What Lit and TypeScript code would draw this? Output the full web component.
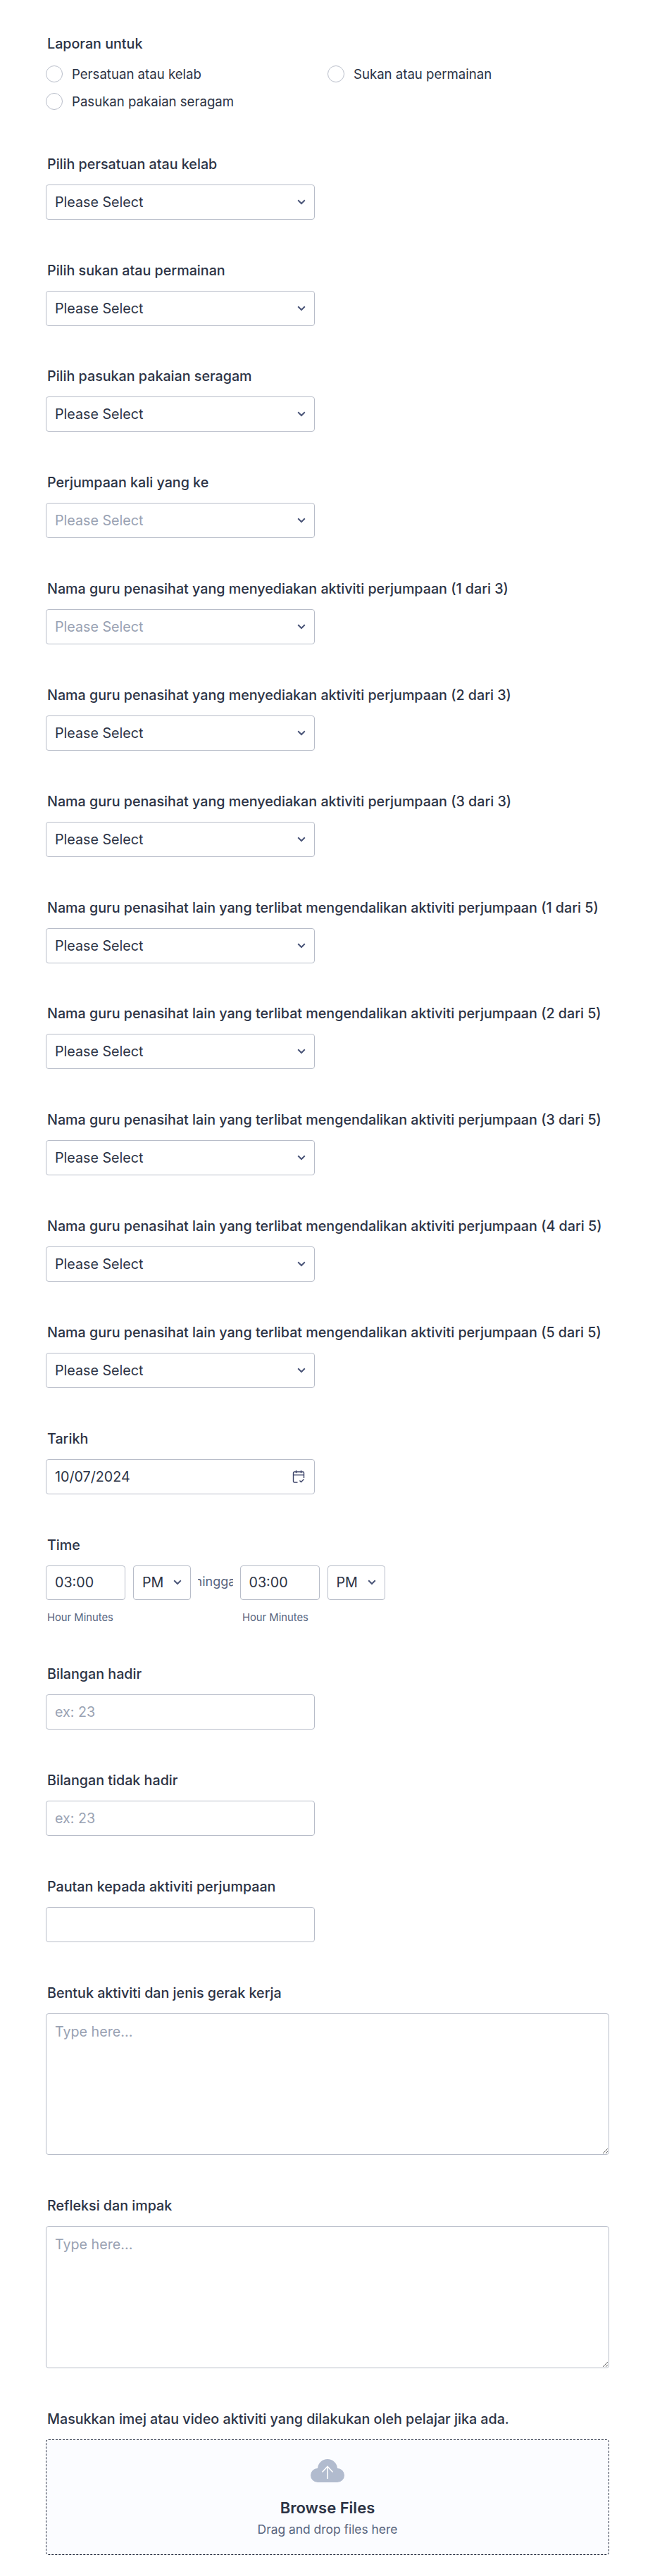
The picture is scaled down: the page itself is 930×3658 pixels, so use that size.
import { LitElement, html, css } from 'lit'
import { customElement } from 'lit/decorators.js'

const chevron = html`<svg class="chev" width="12" height="8" viewBox="0 0 12 8" fill="none"><path d="M1.2 1.300 6 6l4.800-4.700" stroke="#4a5578" stroke-width="2"/></svg>`

const selectFields: { label: string; muted?: boolean }[] = [
  { label: 'Pilih persatuan atau kelab' },
  { label: 'Pilih sukan atau permainan' },
  { label: 'Pilih pasukan pakaian seragam' },
  { label: 'Perjumpaan kali yang ke', muted: true },
  { label: 'Nama guru penasihat yang menyediakan aktiviti perjumpaan (1 dari 3)', muted: true },
  { label: 'Nama guru penasihat yang menyediakan aktiviti perjumpaan (2 dari 3)' },
  { label: 'Nama guru penasihat yang menyediakan aktiviti perjumpaan (3 dari 3)' },
  { label: 'Nama guru penasihat lain yang terlibat mengendalikan aktiviti perjumpaan (1 dari 5)' },
  { label: 'Nama guru penasihat lain yang terlibat mengendalikan aktiviti perjumpaan (2 dari 5)' },
  { label: 'Nama guru penasihat lain yang terlibat mengendalikan aktiviti perjumpaan (3 dari 5)' },
  { label: 'Nama guru penasihat lain yang terlibat mengendalikan aktiviti perjumpaan (4 dari 5)' },
  { label: 'Nama guru penasihat lain yang terlibat mengendalikan aktiviti perjumpaan (5 dari 5)' },
]

@customElement('app-root')
export class AppRoot extends LitElement {
  static styles = css`
    :host {
      display: block;
      background: #fff;
      color: #2c3345;
      font-family: Inter, sans-serif;
    }

    .form {
      display: flex;
      flex-direction: column;
      gap: 61.83px;
      padding: 52px 65px 30px;
    }

    .field {
      display: flex;
      flex-direction: column;
      gap: 19px;
    }

    .label {
      padding-left: 2px;
      font-size: 19.7px;
      line-height: 20px;
      font-weight: 500;
      white-space: nowrap;
    }

    .radios {
      display: grid;
      grid-template-columns: 400px 400px;
      gap: 15px 0;
      margin: 2px 0 5px;
    }

    .radio {
      display: flex;
      align-items: center;
      gap: 13px;
      font-size: 18.6px;
      height: 24px;
    }

    .radio i {
      width: 24px;
      height: 24px;
      box-sizing: border-box;
      border: 1px solid #b8bdc9;
      border-radius: 50%;
    }

    .box {
      position: relative;
      width: 382px;
      height: 50px;
    }

    select,
    input,
    textarea {
      display: block;
      width: 100%;
      height: 100%;
      box-sizing: border-box;
      margin: 0;
      border: 1px solid #b8bdc9;
      border-radius: 4px;
      background: #fff;
      color: #2c3345;
      font-family: inherit;
      font-size: 19.7px;
      outline: none;
    }

    select {
      appearance: none;
      padding: 0 30px 0 12px;
    }

    select.muted {
      color: #99a2b3;
    }

    input {
      padding: 0 12px;
    }

    ::placeholder {
      color: #99a2b3;
      opacity: 1;
    }

    .chev {
      position: absolute;
      top: 50%;
      right: 13px;
      transform: translateY(-50%);
      pointer-events: none;
    }

    .cal {
      position: absolute;
      top: 15px;
      right: 14px;
      pointer-events: none;
    }

    .time-row {
      display: flex;
      height: 49px;
    }

    .time {
      position: relative;
      width: 113px;
      height: 49px;
    }

    .ampm {
      position: relative;
      width: 82px;
      height: 49px;
      margin-left: 11px;
    }

    .hingga {
      display: flex;
      justify-content: center;
      width: 50px;
      margin: 0 10px 0 9.5px;
      overflow: hidden;
      font-size: 18px;
      line-height: 46px;
      color: #57647e;
      white-space: nowrap;
    }

    .time-col {
      display: flex;
      flex-direction: column;
      gap: 16px;
    }

    .sub-row {
      display: flex;
      height: 18px;
    }

    .sub {
      padding-left: 2px;
      font-size: 14.8px;
      line-height: 18px;
      color: #57647e;
    }

    .sub-first {
      width: 275px;
    }

    .wide {
      width: 800px;
      height: 201.5px;
    }

    textarea {
      padding: 13px 12px;
      resize: both;
    }

    .upload {
      display: flex;
      flex-direction: column;
      align-items: center;
      width: 800px;
      height: 164px;
      box-sizing: border-box;
      padding-top: 27px;
      border: 1px dashed #2c3345;
      border-radius: 4px;
      background: #fbfcff;
    }

    .browse {
      margin-top: 25px;
      font-size: 22px;
      line-height: 22px;
      font-weight: 600;
    }

    .drag {
      margin-top: 10px;
      font-size: 17.4px;
      line-height: 20px;
      color: #57647e;
    }
  `

  private renderTime() {
    return html`
      <div class="time"><input type="text" .value=${'03:00'} /></div>
      <div class="ampm">
        <select><option>PM</option></select>
        ${chevron}
      </div>
    `
  }

  render() {
    return html`
      <div class="form">
        <div class="field">
          <div class="label">Laporan untuk</div>
          <div class="radios">
            <label class="radio"><i></i>Persatuan atau kelab</label>
            <label class="radio"><i></i>Sukan atau permainan</label>
            <label class="radio"><i></i>Pasukan pakaian seragam</label>
          </div>
        </div>

        ${selectFields.map(
          (f) => html`
            <div class="field">
              <div class="label">${f.label}</div>
              <div class="box">
                <select class=${f.muted ? 'muted' : ''}><option>Please Select</option></select>
                ${chevron}
              </div>
            </div>
          `
        )}

        <div class="field">
          <div class="label">Tarikh</div>
          <div class="box">
            <input type="text" .value=${'10/07/2024'} />
            <svg class="cal" width="18" height="19" viewBox="0 0 18 19" fill="none" stroke="#3c4468" stroke-width="1.400">
              <path d="M7.500 18H3A1.500 1.500 0 0 1 1.500 16.500V4.500A1.500 1.500 0 0 1 3 3h12a1.500 1.500 0 0 1 1.500 1.500V12" />
              <path d="M1.500 7.500h15M5.500 1v4M12.500 1v4M10.500 15.500l2 2 4-4" />
            </svg>
          </div>
        </div>

        <div class="field">
          <div class="label">Time</div>
          <div class="time-col">
            <div class="time-row">
              ${this.renderTime()}
              <div class="hingga">hingga</div>
              ${this.renderTime()}
            </div>
            <div class="sub-row">
              <div class="sub sub-first">Hour Minutes</div>
              <div class="sub">Hour Minutes</div>
            </div>
          </div>
        </div>

        <div class="field">
          <div class="label">Bilangan hadir</div>
          <div class="box"><input type="text" placeholder="ex: 23" /></div>
        </div>

        <div class="field">
          <div class="label">Bilangan tidak hadir</div>
          <div class="box"><input type="text" placeholder="ex: 23" /></div>
        </div>

        <div class="field">
          <div class="label">Pautan kepada aktiviti perjumpaan</div>
          <div class="box"><input type="text" /></div>
        </div>

        <div class="field">
          <div class="label">Bentuk aktiviti dan jenis gerak kerja</div>
          <div class="wide"><textarea placeholder="Type here..."></textarea></div>
        </div>

        <div class="field">
          <div class="label">Refleksi dan impak</div>
          <div class="wide"><textarea placeholder="Type here..."></textarea></div>
        </div>

        <div class="field">
          <div class="label">Masukkan imej atau video aktiviti yang dilakukan oleh pelajar jika ada.</div>
          <div class="upload">
            <svg width="48" height="33" viewBox="0 0 48 33">
              <path d="M10 33a10 10 0 0 1 0-20A14.040 14.040 0 0 1 38 13a10 10 0 0 1 0 20Z" fill="#b1bbce" />
              <path d="M24 28V10.500M16.500 18.500 24 10.500l7.500 8" fill="none" stroke="#fff" stroke-width="1.600" />
            </svg>
            <div class="browse">Browse Files</div>
            <div class="drag">Drag and drop files here</div>
          </div>
        </div>
      </div>
    `
  }
}
